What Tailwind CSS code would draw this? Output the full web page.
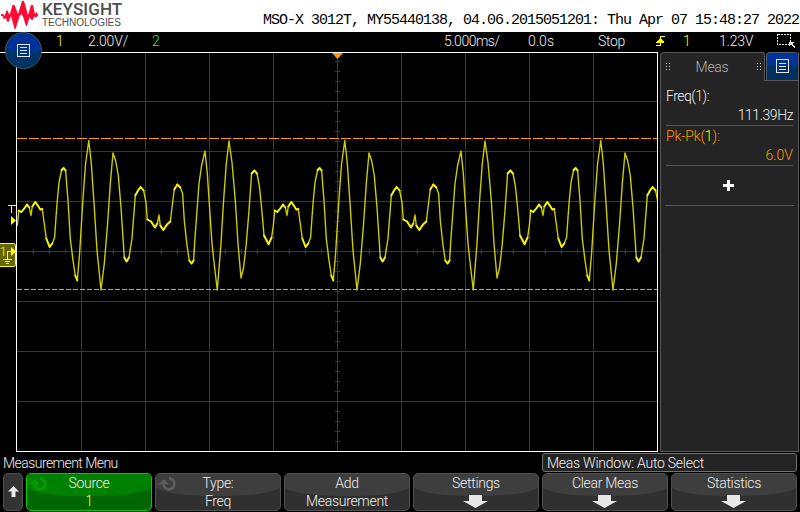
<!DOCTYPE html>
<html lang="en">

<head>
    <meta charset="UTF-8">
    <meta name="viewport" content="width=device-width, initial-scale=1.0">
    <script src="https://cdn.jsdelivr.net/npm/@tailwindcss/browser@4"></script>
    <title>Keysight MSO-X 3012T</title>
</head>

<body class="bg-black">
    <div class="relative flex flex-col w-[800px] h-[512px] overflow-hidden bg-black text-[#f0f0f0] font-['Roboto',sans-serif] font-light text-[14px] leading-[20px]">

        <!-- Title strip -->
        <header class="flex justify-between h-8 bg-white shrink-0">
            <div class="flex">
                <svg class="w-[38px] h-8 ml-px" viewBox="1 0 38 32">
                    <path fill="#ff0a32" d="M1 14 H3 L4.5 16 L6.5 10.5 H7.5 L9.5 15 L12.5 5 H14.5 L18 14 L22 1 H24 L28 15 L31 5 H33 L35 14 L36.5 12 L38 14.5 V15.5 L36 17.5 L34.5 16.5 L32.5 20 H31.5 L29.5 17 L27 26 H26 L23 16.5 L21 14 L19.5 16.5 L15.5 29 H14.5 L11 16 L8.5 22 H7.5 L5.5 17.5 L4 19.5 L2.5 16 H1 Z" />
                </svg>
                <div class="ml-[3px] text-[#4d4d4f]">
                    <div class="h-[17px] leading-[18px] text-[17px] font-medium tracking-[0.1px]">KEYSIGHT</div>
                    <div class="h-[12px] leading-[12px] text-[10px] font-normal font-['Liberation_Sans',sans-serif] tracking-[-0.05px]">TECHNOLOGIES</div>
                </div>
            </div>
            <div class="mt-[11px] w-[537px] h-5 whitespace-pre text-black font-normal font-['Liberation_Mono',monospace] text-[15px] leading-[20px] tracking-[-1.002px]">MSO-X 3012T, MY55440138, 04.06.2015051201: Thu Apr 07 15:48:27 2022</div>
        </header>

        <!-- Channel / timebase / trigger status -->
        <div class="grid grid-cols-[56px_32px_64px_292px_84px_70px_58px_27px_36px_58px_23px] h-5 shrink-0 leading-[19px]">
            <span></span>
            <span class="text-[#ffff00]">1</span>
            <span class="tracking-[-0.1px]">2.00V/</span>
            <span class="text-[#1fff1f]">2</span>
            <span class="tracking-[-0.5px]">5.000ms/</span>
            <span>0.0s</span>
            <span class="tracking-[-0.3px]">Stop</span>
            <svg class="w-[10px] h-5 mt-px" viewBox="0 0 10 20" fill="none" stroke="#ffff00" stroke-width="1" shape-rendering="crispEdges">
                <path d="M4 3.5 H9 M4.5 4 V13 M0 12.5 H5" />
                <path d="M4.5 5 L8.5 9.5 H0.5 Z" fill="#ffff00" stroke="none" />
            </svg>
            <span class="text-[#ffff00]">1</span>
            <span class="tracking-[-0.2px]">1.23V</span>
            <svg class="w-[20px] h-5" viewBox="0 0 20 20" fill="none" stroke="#e4e4e4" shape-rendering="crispEdges">
                <rect x=".5" y="2.5" width="13" height="10" stroke-dasharray="2 1" />
                <path d="M12 10 H17 L15.5 11.5 L18.5 15 L17.5 16 L14 12.5 L12 15 Z" fill="#e4e4e4" stroke="none" />
            </svg>
        </div>

        <main class="flex h-[400px] shrink-0">
            <!-- Waveform grid, 64px per time division and 50px per volt division -->
            <svg id="scope" class="w-[659px] h-[400px] shrink-0" viewBox="0 52 659 400">
                <clipPath id="plot"><rect x="17" y="53" width="640" height="398" /></clipPath>
                <g id="graticule" stroke="#383838" stroke-width="1" shape-rendering="crispEdges"></g>
                <path d="M17 138.5 H657" stroke="#ff9900" stroke-dasharray="10 2" shape-rendering="crispEdges" />
                <path d="M17 289.5 H657" stroke="#ff9900" stroke-dasharray="5 2" shape-rendering="crispEdges" />
                <g id="trace" fill="none" stroke-linecap="round" clip-path="url(#plot)"></g>
                <path d="M0 52.5 H658 M16.5 52 V451 M657.5 52 V452 M16 451.5 H658" stroke="#fff" fill="none" shape-rendering="crispEdges" />
                <path d="M332 53 H343 L337.5 59 Z" fill="#ff9900" />
                <path d="M8 205.5 H16 M11.5 205 V213" stroke="#ffff00" shape-rendering="crispEdges" />
                <path d="M11 216 L16 220.5 L11 225 Z" fill="#ffff00" />
                <rect x="-3" y="243.5" width="18.5" height="23" rx="2" fill="#666600" stroke="#ffff00" />
                <path d="M11 247 L16 251.5 L11 256 Z" fill="#ffff00" />
                <text x="-0.5" y="256" fill="#ffff00" class="text-[13px]">1</text>
                <path d="M12 251.5 H7.5 V259 M3 259.5 H12 M5 261.5 H10 M6 263.5 H9" stroke="#ffff00" fill="none" shape-rendering="crispEdges" />
            </svg>

            <!-- Measurement side panel -->
            <aside class="flex flex-col w-[139px] ml-px rounded-tl bg-[#242424] border-l border-r border-b border-[#585858]">
                <div class="flex h-[29px]">
                    <div class="flex items-center justify-between w-[104px] pl-[5px] pr-[2px] rounded-t border-t border-r border-[#585858] text-[#b4b4b4]">
                        <svg class="w-[5px] h-[9px]" viewBox="0 0 5 9" fill="#c8c8c8"><path d="M0 0h1v1h-1zM3 0h1v1h-1zM0 3h1v1h-1zM3 3h1v1h-1zM0 6h1v1h-1zM3 6h1v1h-1z" /></svg>
                        <span class="tracking-[-0.3px] pr-1">Meas</span>
                        <svg class="w-[5px] h-[9px]" viewBox="0 0 5 9" fill="#c8c8c8"><path d="M0 0h1v1h-1zM3 0h1v1h-1zM0 3h1v1h-1zM3 3h1v1h-1zM0 6h1v1h-1zM3 6h1v1h-1z" /></svg>
                    </div>
                    <div class="flex-1 pl-px bg-black border-b border-[#585858]">
                        <div class="flex h-[28px] items-center justify-center rounded-t border-t border-l border-[#506070] bg-linear-to-b from-[#003399] from-50% to-[#003060] to-50%">
                            <svg class="w-[13px] h-[15px]" viewBox="0 0 13 15" fill="none" stroke="#e4e4e4" shape-rendering="crispEdges"><path d="M.5 .5H12.5V13.5H.5ZM3 4.5H10M3 7.5H10M3 10.5H10" /></svg>
                        </div>
                    </div>
                </div>
                <div class="mx-[5px] pt-[5px] h-[45px] border-b border-[#585858]">
                    <p class="h-5 tracking-[-0.5px]">Freq(<span class="text-[#ffff00]">1</span>):</p>
                    <p class="h-5 leading-[19px] text-right tracking-[-0.45px]">111.39Hz</p>
                </div>
                <div class="mx-[5px] h-[40px] border-b border-[#585858] text-[#ff9900]">
                    <p class="h-5 tracking-[-0.1px]">Pk-Pk(<span class="text-[#ffff00]">1</span>):</p>
                    <p class="h-5 leading-[19px] text-right">6.0V</p>
                </div>
                <div class="flex items-center justify-center mx-1 h-[40px] pb-px pr-[2px] border-b border-[#585858]">
                    <svg class="w-[11px] h-[11px]" viewBox="0 0 11 11"><path d="M4 0H7V4H11V7H7V11H4V7H0V4H4Z" fill="#fff" /></svg>
                </div>
            </aside>
        </main>

        <!-- Menu title and message line -->
        <div class="flex justify-between h-[21px] pt-px px-[3px] shrink-0">
            <span class="leading-[20px] tracking-[-0.55px]">Measurement Menu</span>
            <span class="w-[255px] h-[19px] pl-1 rounded-[3px] border border-[#707070] bg-[#242424] leading-[18px] tracking-[-0.25px]">Meas Window: Auto Select</span>
        </div>

        <!-- Softkeys -->
        <nav class="flex gap-[3px] h-[39px] pl-[3px] shrink-0" id="softkeys">
            <button class="flex items-center justify-center w-[20px] h-[38px] pb-[2px] rounded-[5px] border border-[#505050] bg-[#333333]">
                <svg class="w-[11px] h-[11px]" viewBox="0 0 11 11"><path d="M5.5 0L11 5.5H7.5V11H3.5V5.5H0Z" fill="#e8e8e8" /></svg>
            </button>
        </nav>

        <div class="absolute left-[5px] top-[32px] flex items-center justify-center w-[37px] h-[37px] rounded-full border border-[#4a545c] bg-[radial-gradient(ellipse_30px_20px_at_20px_0px,#003399_98%,#003366_100%)]">
            <svg class="w-[13px] h-[13px]" viewBox="0 0 13 13" fill="none" stroke="#e4e4e4" shape-rendering="crispEdges"><path d="M.5 .5H12.5V12.5H.5ZM3 3.5H10M3 6.5H10M3 9.5H10" /></svg>
        </div>
    </div>

    <script>
        // one beat period of the signal, [x, y] in screen pixels
        const beat = [
            [17, 225], [18.5, 210], [21, 211.5], [24, 208], [26.7, 204], [29, 207], [30.7, 215], [32, 206], [35, 201.5], [37.5, 205],
            [40, 209], [42, 208.5], [43.5, 220], [46, 238], [49.3, 246.5], [52, 243], [54.3, 237], [56.7, 203], [58.7, 182],
            [61.3, 169.5], [63.3, 167.5], [65.3, 170], [67.7, 200], [70, 238], [72.7, 260], [75, 275], [77, 280], [79.3, 253],
            [82.7, 198], [85.3, 163], [88.5, 140], [91, 163], [94, 207], [96.7, 250], [100.7, 289.5], [104, 263], [107.3, 223],
            [110, 183], [112.7, 152.5], [115.3, 160], [118, 175], [120.7, 207], [122.7, 237], [124, 257], [126.3, 261],
            [128.7, 257], [131.7, 238], [135, 195], [137.7, 190], [140.3, 186.5], [143.3, 190], [145.7, 202], [147, 219],
            [150.7, 221], [154.7, 227], [157, 223], [158.7, 214.5], [160, 225], [163, 229.5], [166.7, 224], [170, 221],
            [171.7, 207], [174, 189], [177, 184], [180, 187], [182.3, 193], [184, 220], [186.7, 245], [189, 260], [191.3, 263],
            [193.3, 260], [194.7, 237], [196.7, 210], [198.7, 183], [201.3, 165], [204.7, 150.5], [207, 173], [209, 203],
            [211.7, 243], [214.3, 267], [217, 289.5], [220.7, 243], [223.3, 200], [226, 163], [228.7, 140.5], [231.7, 162],
            [235, 200], [237.7, 243], [240.7, 277.5], [243.3, 267], [246, 243], [248.7, 210], [251.3, 173], [254, 170],
            [256.7, 173], [259.3, 187], [262, 215], [263.7, 235], [268.3, 243.7], [271.3, 237]
        ];

        function drawGraticule() {
            let d = '';
            for (let x = 81; x < 657; x += 64) d += `M${x + 0.5} 53V451`;
            for (let y = 101; y < 451; y += 50) d += `M17 ${y + 0.5}H657`;
            for (let x = 33; x < 657; x += 16) d += `M${x + 0.5} 249V254`;
            for (let y = 61; y < 451; y += 10) d += `M335 ${y + 0.5}H340`;
            document.getElementById('graticule').innerHTML = `<path d="${d}" />`;
        }

        function drawTrace() {
            const pts = [];
            for (let n = 0; n < 3; n++) beat.forEach(([x, y]) => pts.push([x + n * 256, y + 0.5]));
            let all = '', slow = '';
            for (let i = 1; i < pts.length && pts[i - 1][0] < 658; i++) {
                const [x0, y0] = pts[i - 1], [x1, y1] = pts[i];
                const seg = `M${x0 + 0.3} ${y0}L${x1 + 0.3} ${y1}`;
                all += seg;
                // the beam is brighter where the signal moves slowly
                if (Math.abs(y1 - y0) / (x1 - x0) < 2.6) slow += seg;
            }
            document.getElementById('trace').innerHTML =
                `<path d="${all}" stroke="#cccc00" stroke-width="1.4" /><path d="${slow}" stroke="#f4f400" stroke-width="1.9" />`;
        }

        const keys = [
            { label: 'Source', value: '1', knob: true, active: true },
            { label: 'Type:', value: 'Freq', knob: true },
            { label: 'Add', value: 'Measurement' },
            { label: 'Settings' },
            { label: 'Clear Meas' },
            { label: 'Statistics' }
        ];

        function drawSoftkeys() {
            const nav = document.getElementById('softkeys');
            keys.forEach(key => {
                const el = document.createElement('button');
                el.className = 'relative w-[126px] h-[38px] rounded-[5px] border overflow-hidden font-light tracking-[-0.3px] ' +
                    (key.active ? 'border-[#00cc00] bg-[#006600]' : 'border-[#505050] bg-[#303030]');
                const arrow = '<svg class="ml-[49px] w-[25px] h-[13px]" viewBox="0 0 25 13"><path d="M6 0H19V6H25L12.5 13L0 6H6Z" fill="#e8e8e8"/></svg>';
                const icon = key.knob ? `<svg class="absolute left-[2px] top-[2px] w-[19px] h-[16px] ${key.active ? 'text-[#00a000]' : 'text-[#5c5c5c]'}" viewBox="0 0 19 16"><path d="M0 8.5L6 3L11 8.5Z" fill="currentColor"/><path d="M11 2.5A5.4 5.4 0 1 1 5.5 8.5" fill="none" stroke="currentColor" stroke-width="2.8"/></svg>` : '';
                el.innerHTML = `
            <svg class="absolute inset-0 w-full h-full" viewBox="0 0 124 36" preserveAspectRatio="none">
                <path d="M0 0H124V14Q110 22 62 22Q14 22 0 14Z" fill="${key.active ? '#008000' : '#3e3e3e'}" />
            </svg>${icon}
            <div class="relative h-[18px] leading-[19px]">${key.label}</div>
            <div class="relative h-[18px] ${key.value ? 'leading-[18px]' : 'pt-[3px] leading-[15px]'} ${key.active ? 'text-[#ffff00]' : ''}">${key.value || arrow}</div>`;
                nav.appendChild(el);
            });
        }

        drawGraticule();
        drawTrace();
        drawSoftkeys();
    </script>
</body>

</html>
